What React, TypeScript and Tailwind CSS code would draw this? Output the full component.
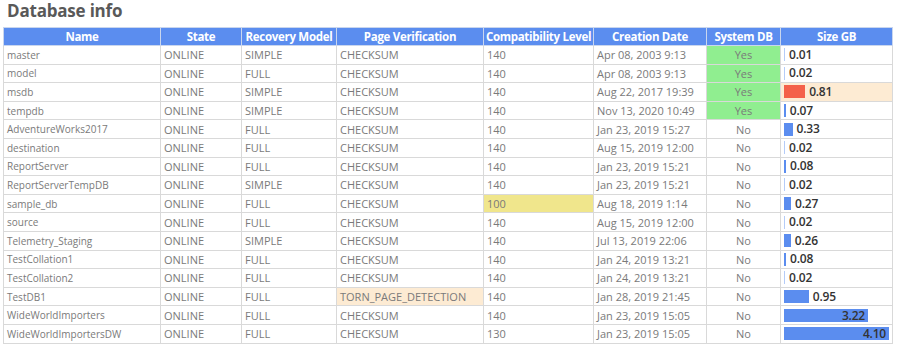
const rows = [
  ["master", "ONLINE", "SIMPLE", "CHECKSUM", "140", "Apr 08, 2003 9:13", "Yes", 0.01],
  ["model", "ONLINE", "FULL", "CHECKSUM", "140", "Apr 08, 2003 9:13", "Yes", 0.02],
  ["msdb", "ONLINE", "SIMPLE", "CHECKSUM", "140", "Aug 22, 2017 19:39", "Yes", 0.81],
  ["tempdb", "ONLINE", "SIMPLE", "CHECKSUM", "140", "Nov 13, 2020 10:49", "Yes", 0.07],
  ["AdventureWorks2017", "ONLINE", "FULL", "CHECKSUM", "140", "Jan 23, 2019 15:27", "No", 0.33],
  ["destination", "ONLINE", "FULL", "CHECKSUM", "140", "Aug 15, 2019 12:00", "No", 0.02],
  ["ReportServer", "ONLINE", "FULL", "CHECKSUM", "140", "Jan 23, 2019 15:21", "No", 0.08],
  ["ReportServerTempDB", "ONLINE", "SIMPLE", "CHECKSUM", "140", "Jan 23, 2019 15:21", "No", 0.02],
  ["sample_db", "ONLINE", "FULL", "CHECKSUM", "100", "Aug 18, 2019 1:14", "No", 0.27],
  ["source", "ONLINE", "FULL", "CHECKSUM", "140", "Aug 15, 2019 12:00", "No", 0.02],
  ["Telemetry_Staging", "ONLINE", "SIMPLE", "CHECKSUM", "140", "Jul 13, 2019 22:06", "No", 0.26],
  ["TestCollation1", "ONLINE", "FULL", "CHECKSUM", "140", "Jan 24, 2019 13:21", "No", 0.08],
  ["TestCollation2", "ONLINE", "FULL", "CHECKSUM", "140", "Jan 24, 2019 13:21", "No", 0.02],
  ["TestDB1", "ONLINE", "FULL", "TORN_PAGE_DETECTION", "140", "Jan 28, 2019 21:45", "No", 0.95],
  ["WideWorldImporters", "ONLINE", "FULL", "CHECKSUM", "140", "Jan 23, 2019 15:05", "No", 3.22],
  ["WideWorldImportersDW", "ONLINE", "FULL", "CHECKSUM", "130", "Jan 23, 2019 15:05", "No", 4.1],
] as const;

const headers = [
  "Name",
  "State",
  "Recovery Model",
  "Page Verification",
  "Compatibility Level",
  "Creation Date",
  "System DB",
  "Size GB",
];

const widths = [157, 81, 95, 147, 110, 113, 74, 112];

const MAX_BAR = 107;

const SizeCell = ({ value }: { value: number }) => {
  const w = (value / 4.1) * MAX_BAR;
  const inside = w > 60;
  const hot = value === 0.81;
  return (
    <td className={`border border-[#d9d9d9] px-[3px] ${hot ? "bg-[#fdebd3]" : ""}`}>
      <div className="flex items-center h-full">
        <div
          className={`relative h-[13px] ${hot ? "bg-[#f4614a]" : "bg-[#5b8def]"}`}
          style={{ width: Math.max(w, 1), opacity: w < 1 ? 0.45 : 1 }}
        >
          {inside && (
            <span className="absolute right-[3px] top-[-2px] text-[12px] font-semibold text-[#333] tracking-[-0.2px]">
              {value.toFixed(2)}
            </span>
          )}
        </div>
        {!inside && (
          <span className="ml-[4px] text-[12px] font-semibold text-[#333] leading-none tracking-[-0.2px]">
            {value.toFixed(2)}
          </span>
        )}
      </div>
    </td>
  );
};

const App = () => {
  return (
    <div className="w-[900px] h-[345px] bg-white overflow-hidden font-['Open_Sans',sans-serif]">
      <h1 className="pl-[7px] h-[27px] text-[17px] font-bold text-[#595959] leading-[22px] tracking-[-0.2px]">
        Database info
      </h1>
      <table className="ml-[3px] table-fixed border-collapse w-[889px] text-[11px] text-[#7a7a7a]">
        <colgroup>
          {widths.map((w, i) => (
            <col key={i} style={{ width: w }} />
          ))}
        </colgroup>
        <thead>
          <tr className="h-[18px] bg-[#5b8def]">
            {headers.map((h) => (
              <th
                key={h}
                className="border border-[#c9d6ee] text-white font-bold text-[11.5px] leading-none text-center tracking-[-0.3px] whitespace-nowrap"
              >
                {h}
              </th>
            ))}
          </tr>
        </thead>
        <tbody>
          {rows.map((r) => (
            <tr key={r[0]} className="h-[18.6px]">
              <td className="border border-[#d9d9d9] pl-[3px] text-[10px] leading-none whitespace-nowrap">
                {r[0]}
              </td>
              <td className="border border-[#d9d9d9] pl-[3px] leading-none">{r[1]}</td>
              <td className="border border-[#d9d9d9] pl-[3px] leading-none">{r[2]}</td>
              <td
                className={`border border-[#d9d9d9] pl-[3px] leading-none ${
                  r[3] === "TORN_PAGE_DETECTION" ? "bg-[#fdebd3]" : ""
                }`}
              >
                {r[3]}
              </td>
              <td
                className={`border border-[#d9d9d9] pl-[3px] leading-none ${
                  r[4] === "100" ? "bg-[#f0e68c]" : ""
                }`}
              >
                {r[4]}
              </td>
              <td className="border border-[#d9d9d9] pl-[3px] leading-none whitespace-nowrap">
                {r[5]}
              </td>
              <td
                className={`border border-[#d9d9d9] text-center leading-none ${
                  r[6] === "Yes" ? "bg-[#90ee90]" : ""
                }`}
              >
                {r[6]}
              </td>
              <SizeCell value={r[7]} />
            </tr>
          ))}
        </tbody>
      </table>
    </div>
  );
};

export default App;
